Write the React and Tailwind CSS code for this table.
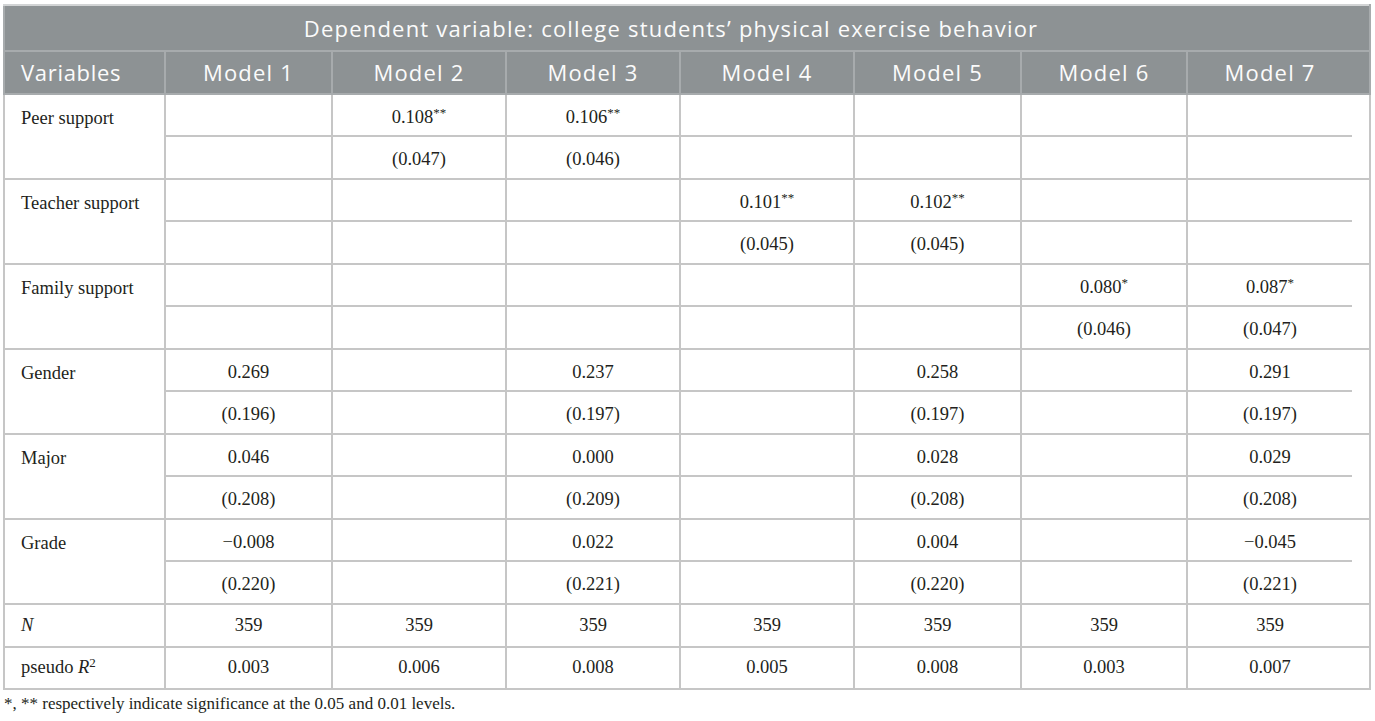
import React from "react";

// regression table: logistic models of exercise behaviour
const COLS = [161, 167, 174, 174, 174, 167, 166, 183];

const ROWS = [
  { name: "Peer support", vals: [null, ["0.108**"], ["0.106**"], null, null, null, null], ses: [null, "(0.047)", "(0.046)", null, null, null, null] },
  { name: "Teacher support", vals: [null, null, null, ["0.101**"], ["0.102**"], null, null], ses: [null, null, null, "(0.045)", "(0.045)", null, null] },
  { name: "Family support", vals: [null, null, null, null, null, ["0.080*"], ["0.087*"]], ses: [null, null, null, null, null, "(0.046)", "(0.047)"] },
  { name: "Gender", vals: [["0.269"], null, ["0.237"], null, ["0.258"], null, ["0.291"]], ses: ["(0.196)", null, "(0.197)", null, "(0.197)", null, "(0.197)"] },
  { name: "Major", vals: [["0.046"], null, ["0.000"], null, ["0.028"], null, ["0.029"]], ses: ["(0.208)", null, "(0.209)", null, "(0.208)", null, "(0.208)"] },
  { name: "Grade", vals: [["\u22120.008"], null, ["0.022"], null, ["0.004"], null, ["\u22120.045"]], ses: ["(0.220)", null, "(0.221)", null, "(0.220)", null, "(0.221)"] },
];

function Coef({ v }) {
  if (!v) return null;
  const s = v[0];
  const m = s.match(/^(.*?)(\*+)$/);
  if (!m) return <span>{s}</span>;
  return (
    <span>
      {m[1]}
      <span className="text-[13px] relative -top-[6px]">{m[2]}</span>
    </span>
  );
}

export default function App() {
  const serif = "font-['Liberation_Serif','Times_New_Roman',serif]";
  const sans = "font-['Open_Sans','Lato',sans-serif]";
  const cell = "border-2 border-[#c6c6c6] p-0";

  return (
    <div className="bg-white w-[1375px] h-[721px] pt-[4px] pl-[3px]">
      <table className={`table-fixed border-collapse text-[#231f20] ${serif} text-[18.5px]`} style={{ width: 1368 }}>
        <colgroup>
          {COLS.map((w, i) => (
            <col key={i} style={{ width: w }} />
          ))}
        </colgroup>
        <thead className={`${sans} text-[#fbfbfb] bg-[#8d9294]`}>
          <tr>
            <th colSpan={8} className="h-[46px] border-2 border-[#a7abad] border-t-[#d2d4d5] font-normal text-[22px] tracking-[1.2px] text-center align-middle pr-[32px]">
              Dependent variable: college students’ physical exercise behavior
            </th>
          </tr>
          <tr>
            <th className="h-[43px] border-2 border-[#a7abad] font-normal text-[22px] tracking-[0.7px] text-left pl-[16px]">Variables</th>
            {[1, 2, 3, 4, 5, 6, 7].map((n) => (
              <th
                key={n}
                className={`h-[43px] border-2 border-[#a7abad] font-normal text-[22px] tracking-[1.2px] text-center ${n === 7 ? "pr-[17px]" : ""}`}
              >
                Model {n}
              </th>
            ))}
          </tr>
        </thead>
        <tbody>
          {ROWS.map((r) => (
            <tr key={r.name}>
              <td className={`${cell} align-top`}>
                <div className="h-[42px] flex items-center pl-[16px] pt-[5px]">{r.name}</div>
              </td>
              {r.vals.map((v, i) => (
                <td key={i} className={`${cell} ${i === 6 ? "pr-[17px]" : ""}`}>
                  <div className="h-[42px] flex items-center justify-center border-b-2 border-[#c6c6c6] pt-[5px]">
                    <Coef v={v} />
                  </div>
                  <div className="h-[41px] flex items-center justify-center pt-[5px]">{r.ses[i]}</div>
                </td>
              ))}
            </tr>
          ))}
          <tr>
            <td className={`${cell} h-[43px] pl-[16px] italic`}>N</td>
            {[0, 1, 2, 3, 4, 5, 6].map((i) => (
              <td key={i} className={`${cell} h-[43px] text-center ${i === 6 ? "pr-[17px]" : ""}`}>
                359
              </td>
            ))}
          </tr>
          <tr>
            <td className={`${cell} h-[42px] pl-[16px]`}>
              pseudo <span className="italic">R</span>
              <span className="text-[13px] relative -top-[6px]">2</span>
            </td>
            {["0.003", "0.006", "0.008", "0.005", "0.008", "0.003", "0.007"].map((v, i) => (
              <td key={i} className={`${cell} h-[42px] text-center ${i === 6 ? "pr-[17px]" : ""}`}>
                {v}
              </td>
            ))}
          </tr>
        </tbody>
      </table>
      <p className={`${serif} text-[17px] text-[#231f20] mt-[1px] pl-[1px]`}>
        *, ** respectively indicate significance at the 0.05 and 0.01 levels.
      </p>
    </div>
  );
}
